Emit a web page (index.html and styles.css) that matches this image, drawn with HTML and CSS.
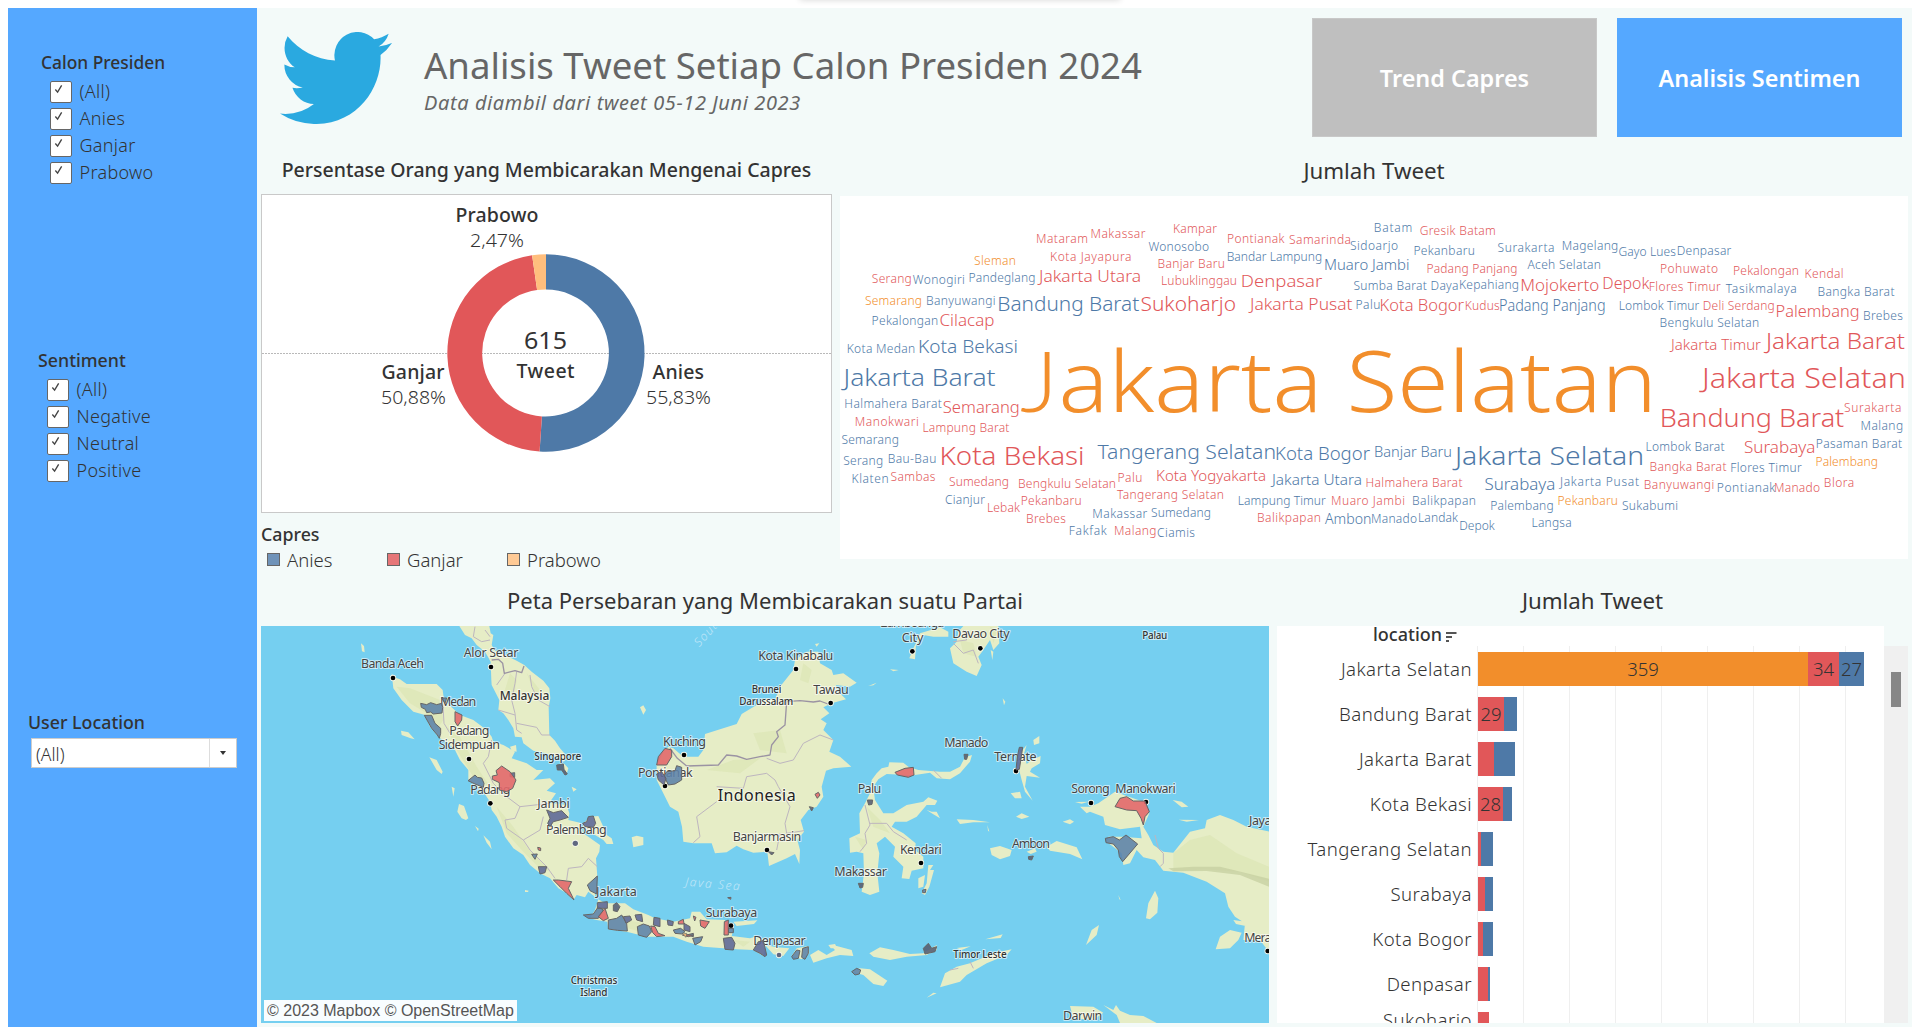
FILE: index.html
```html
<!DOCTYPE html>
<html lang="id">
<head>
<meta charset="utf-8">
<title>Analisis Tweet Setiap Calon Presiden 2024</title>
<link rel="stylesheet" href="styles.css">
</head>
<body>
<div class="top-shadow"></div>
<div class="dashboard">
  <aside class="sidebar">
    <section class="filter filter-capres">
      <h3>Calon Presiden</h3>
      <label><span class="box"><svg viewBox="0 0 10 10"><path d="M1.5 5.5L4 8.5L8.5 1"/></svg></span><span>(All)</span></label>
      <label><span class="box"><svg viewBox="0 0 10 10"><path d="M1.5 5.5L4 8.5L8.5 1"/></svg></span><span>Anies</span></label>
      <label><span class="box"><svg viewBox="0 0 10 10"><path d="M1.5 5.5L4 8.5L8.5 1"/></svg></span><span>Ganjar</span></label>
      <label><span class="box"><svg viewBox="0 0 10 10"><path d="M1.5 5.5L4 8.5L8.5 1"/></svg></span><span>Prabowo</span></label>
    </section>
    <section class="filter filter-sentiment">
      <h3>Sentiment</h3>
      <label><span class="box"><svg viewBox="0 0 10 10"><path d="M1.5 5.5L4 8.5L8.5 1"/></svg></span><span>(All)</span></label>
      <label><span class="box"><svg viewBox="0 0 10 10"><path d="M1.5 5.5L4 8.5L8.5 1"/></svg></span><span>Negative</span></label>
      <label><span class="box"><svg viewBox="0 0 10 10"><path d="M1.5 5.5L4 8.5L8.5 1"/></svg></span><span>Neutral</span></label>
      <label><span class="box"><svg viewBox="0 0 10 10"><path d="M1.5 5.5L4 8.5L8.5 1"/></svg></span><span>Positive</span></label>
    </section>
    <section class="filter filter-location">
      <h3>User Location</h3>
      <div class="select"><span>(All)</span><i></i></div>
    </section>
  </aside>
  <main class="main">
    <header class="header">
      <svg class="bird" viewBox="0 2.25 24 19.5" preserveAspectRatio="none"><path d="M23.953 4.57a10 10 0 01-2.825.775 4.958 4.958 0 002.163-2.723c-.951.555-2.005.959-3.127 1.184a4.92 4.92 0 00-8.384 4.482C7.69 8.095 4.067 6.13 1.64 3.162a4.822 4.822 0 00-.666 2.475c0 1.71.87 3.213 2.188 4.096a4.904 4.904 0 01-2.228-.616v.06a4.923 4.923 0 003.946 4.827 4.996 4.996 0 01-2.212.085 4.936 4.936 0 004.604 3.417 9.867 9.867 0 01-6.102 2.105c-.39 0-.779-.023-1.17-.067a13.995 13.995 0 007.557 2.209c9.053 0 13.998-7.496 13.998-13.985 0-.21 0-.42-.015-.63A9.935 9.935 0 0024 4.59z"/></svg>
      <div class="titles">
        <h1>Analisis Tweet Setiap Calon Presiden 2024</h1>
        <p>Data diambil dari tweet 05-12 Juni 2023</p>
      </div>
      <nav class="nav">
        <a class="nav-gray">Trend Capres</a>
        <a class="nav-blue">Analisis Sentimen</a>
      </nav>
    </header>

    <div class="row row-top">
      <section class="col-donut">
        <h2 class="h-donut">Persentase Orang yang Membicarakan Mengenai Capres</h2>
        <div class="panel-donut">
          <svg viewBox="262 195 569 317" width="569" height="317">
            <path d="M262 353.5H831" stroke="#b9b9b9" stroke-dasharray="2 1"/>
            <path d="M546 254.3A98.7 98.7 0 1 1 539.6 451.5L541.9 416.4A63.5 63.5 0 1 0 546 289.5Z" fill="#4e79a7"/>
            <path d="M539.6 451.5A98.7 98.7 0 0 1 532.1 255.3L537.1 290.1A63.5 63.5 0 0 0 541.9 416.4Z" fill="#e15759"/>
            <path d="M532.1 255.3A98.7 98.7 0 0 1 546 254.3V289.5A63.5 63.5 0 0 0 537.1 290.1Z" fill="#ffbe7d"/>
            <g class="donut-name">
              <text x="455.5" y="221.5" textLength="83">Prabowo</text>
              <text x="381.5" y="379" textLength="63">Ganjar</text>
              <text x="652.5" y="379" textLength="51.5">Anies</text>
              <text x="516.5" y="378" textLength="58">Tweet</text>
            </g>
            <text class="donut-total" x="524" y="349" textLength="43" lengthAdjust="spacingAndGlyphs">615</text>
            <g class="donut-pct">
              <text x="470" y="247" textLength="54" lengthAdjust="spacingAndGlyphs">2,47%</text>
              <text x="381" y="404" textLength="65" lengthAdjust="spacingAndGlyphs">50,88%</text>
              <text x="646" y="404" textLength="65" lengthAdjust="spacingAndGlyphs">55,83%</text>
            </g>
          </svg>
        </div>
        <div class="legend">
          <h3>Capres</h3>
          <ul>
            <li><i class="sw-a"></i>Anies</li>
            <li><i class="sw-g"></i>Ganjar</li>
            <li><i class="sw-p"></i>Prabowo</li>
          </ul>
        </div>
      </section>

      <section class="col-cloud">
        <h2 class="h-cloud">Jumlah Tweet</h2>
        <svg class="cloud" viewBox="840 196 1068 363" width="1068" height="363">
          <g class="o">
            <text class="top-word" x="1020" y="411.7" textLength="637" lengthAdjust="spacingAndGlyphs" font-size="85"><tspan class="cap-j">J</tspan>akarta Selatan</text>
            <text x="974" y="264.7" textLength="42">Sleman</text>
            <text x="865" y="305.3" textLength="57">Semarang</text>
            <text x="1815.5" y="466" textLength="62.5">Palembang</text>
            <text x="1557.5" y="505" textLength="60.5">Pekanbaru</text>
          </g>
          <g class="r">
            <text x="1036" y="243" textLength="52">Mataram</text>
            <text x="1090.5" y="238" textLength="55">Makassar</text>
            <text x="1173" y="233" textLength="44">Kampar</text>
            <text x="1227" y="243" textLength="57.5">Pontianak</text>
            <text x="1289" y="244.3" textLength="62">Samarinda</text>
            <text x="1050" y="261" textLength="81.5">Kota Jayapura</text>
            <text x="1157.5" y="268" textLength="67.5">Banjar Baru</text>
            <text x="871.8" y="283" textLength="40">Serang</text>
            <text x="1039" y="282.3" textLength="102" lengthAdjust="spacingAndGlyphs" font-size="16">Jakarta Utara</text>
            <text x="1161" y="284.7" textLength="76">Lubuklinggau</text>
            <text x="1240.8" y="286.7" textLength="81.5" lengthAdjust="spacingAndGlyphs" font-size="17">Denpasar</text>
            <text x="1140.5" y="311" textLength="95.5" lengthAdjust="spacingAndGlyphs" font-size="20">Sukoharjo</text>
            <text x="1250" y="310" textLength="102.5" lengthAdjust="spacingAndGlyphs" font-size="16">Jakarta Pusat</text>
            <text x="939.5" y="326.3" textLength="55" lengthAdjust="spacingAndGlyphs" font-size="16">Cilacap</text>
            <text x="1419.8" y="235.3" textLength="76">Gresik Batam</text>
            <text x="1426.4" y="272.7" textLength="91">Padang Panjang</text>
            <text x="1660" y="273" textLength="58">Pohuwato</text>
            <text x="1733" y="275.3" textLength="66">Pekalongan</text>
            <text x="1804.5" y="278" textLength="39">Kendal</text>
            <text x="1520.2" y="291.3" textLength="79" lengthAdjust="spacingAndGlyphs" font-size="16.5">Mojokerto</text>
            <text x="1602.3" y="289" textLength="47" lengthAdjust="spacingAndGlyphs" font-size="16">Depok</text>
            <text x="1648.8" y="291" textLength="72">Flores Timur</text>
            <text x="1379.6" y="311" textLength="84.5" lengthAdjust="spacingAndGlyphs" font-size="16.5">Kota Bogor</text>
            <text x="1464.7" y="309.7" textLength="35">Kudus</text>
            <text x="1702.8" y="309.7" textLength="72">Deli Serdang</text>
            <text x="1775.5" y="317" textLength="84" lengthAdjust="spacingAndGlyphs" font-size="16.5">Palembang</text>
            <text x="1671" y="350" textLength="90" lengthAdjust="spacingAndGlyphs" font-size="14.5">Jakarta Timur</text>
            <text x="1766" y="349" textLength="139" lengthAdjust="spacingAndGlyphs" font-size="22">Jakarta Barat</text>
            <text x="1702" y="387.7" textLength="204" lengthAdjust="spacingAndGlyphs" font-size="27.5">Jakarta Selatan</text>
            <text x="942.8" y="413" textLength="77" lengthAdjust="spacingAndGlyphs" font-size="16">Semarang</text>
            <text x="854.8" y="426" textLength="64">Manokwari</text>
            <text x="922.4" y="432" textLength="87">Lampung Barat</text>
            <text x="939.5" y="465" textLength="145" lengthAdjust="spacingAndGlyphs" font-size="26">Kota Bekasi</text>
            <text x="890.5" y="481" textLength="45">Sambas</text>
            <text x="949" y="486" textLength="60">Sumedang</text>
            <text x="1018" y="488" textLength="98">Bengkulu Selatan</text>
            <text x="1117.5" y="482" textLength="25">Palu</text>
            <text x="1156" y="481" textLength="110" lengthAdjust="spacingAndGlyphs" font-size="14">Kota Yogyakarta</text>
            <text x="1365.5" y="487" textLength="97">Halmahera Barat</text>
            <text x="987" y="512" textLength="33">Lebak</text>
            <text x="1020.7" y="505" textLength="61">Pekanbaru</text>
            <text x="1117" y="499" textLength="107">Tangerang Selatan</text>
            <text x="1331" y="505" textLength="74">Muaro Jambi</text>
            <text x="1026" y="523" textLength="40">Brebes</text>
            <text x="1257" y="522" textLength="64">Balikpapan</text>
            <text x="1114" y="535" textLength="42.5">Malang</text>
            <text x="1744" y="453" textLength="71.5" lengthAdjust="spacingAndGlyphs" font-size="15.5">Surabaya</text>
            <text x="1659.8" y="427" textLength="184.5" lengthAdjust="spacingAndGlyphs" font-size="25.5">Bandung Barat</text>
            <text x="1844" y="412" textLength="57.5">Surakarta</text>
            <text x="1649.5" y="471" textLength="77">Bangka Barat</text>
            <text x="1643.8" y="489" textLength="70.5">Banyuwangi</text>
            <text x="1774" y="492" textLength="46">Manado</text>
            <text x="1823.8" y="487" textLength="30.5">Blora</text>
          </g>
          <g class="b">
            <text x="1148.5" y="251" textLength="60.5">Wonosobo</text>
            <text x="1226.7" y="261" textLength="95.5">Bandar Lampung</text>
            <text x="1324" y="270" textLength="85.5" lengthAdjust="spacingAndGlyphs" font-size="14.5">Muaro Jambi</text>
            <text x="912.8" y="283.7" textLength="52">Wonogiri</text>
            <text x="968.5" y="282" textLength="67">Pandeglang</text>
            <text x="1353.5" y="289.7" textLength="105">Sumba Barat Daya</text>
            <text x="926" y="305" textLength="69.5">Banyuwangi</text>
            <text x="997.3" y="311" textLength="142" lengthAdjust="spacingAndGlyphs" font-size="20">Bandung Barat</text>
            <text x="1355.4" y="309" textLength="25">Palu</text>
            <text x="871.6" y="324.7" textLength="66.5">Pekalongan</text>
            <text x="846.7" y="353" textLength="68.5">Kota Medan</text>
            <text x="918" y="353" textLength="100" lengthAdjust="spacingAndGlyphs" font-size="17.5">Kota Bekasi</text>
            <text x="843.5" y="386" textLength="152" lengthAdjust="spacingAndGlyphs" font-size="23.5">Jakarta Barat</text>
            <text x="1373.8" y="232" textLength="38.5">Batam</text>
            <text x="1350" y="250.3" textLength="48">Sidoarjo</text>
            <text x="1413.4" y="255.3" textLength="61.5">Pekanbaru</text>
            <text x="1497.5" y="252.3" textLength="57">Surakarta</text>
            <text x="1561.8" y="250.3" textLength="56.5">Magelang</text>
            <text x="1618.4" y="256" textLength="57.5">Gayo Lues</text>
            <text x="1676.8" y="255.3" textLength="54.5">Denpasar</text>
            <text x="1527.5" y="269.3" textLength="73.5">Aceh Selatan</text>
            <text x="1459" y="289" textLength="60">Kepahiang</text>
            <text x="1725.8" y="293" textLength="71">Tasikmalaya</text>
            <text x="1817.5" y="296" textLength="77">Bangka Barat</text>
            <text x="1499" y="311" textLength="106.5" lengthAdjust="spacingAndGlyphs" font-size="15.5">Padang Panjang</text>
            <text x="1618.8" y="309.7" textLength="80.5">Lombok Timur</text>
            <text x="1863" y="320" textLength="40">Brebes</text>
            <text x="1659.6" y="327" textLength="99.5">Bengkulu Selatan</text>
            <text x="844.3" y="408" textLength="97.5">Halmahera Barat</text>
            <text x="841.4" y="444" textLength="57.5">Semarang</text>
            <text x="843.2" y="465" textLength="40">Serang</text>
            <text x="887.8" y="463" textLength="48.5">Bau-Bau</text>
            <text x="1097.5" y="459" textLength="178.5" lengthAdjust="spacingAndGlyphs" font-size="20">Tangerang Selatan</text>
            <text x="1275" y="460" textLength="95" lengthAdjust="spacingAndGlyphs" font-size="18">Kota Bogor</text>
            <text x="1374" y="457" textLength="78" lengthAdjust="spacingAndGlyphs" font-size="14">Banjar Baru</text>
            <text x="851.6" y="483" textLength="37">Klaten</text>
            <text x="1272" y="485" textLength="90" lengthAdjust="spacingAndGlyphs" font-size="14.5">Jakarta Utara</text>
            <text x="945" y="504" textLength="40">Cianjur</text>
            <text x="1237.8" y="505" textLength="88">Lampung Timur</text>
            <text x="1092.3" y="518" textLength="55">Makassar</text>
            <text x="1151" y="517" textLength="60">Sumedang</text>
            <text x="1325" y="524" textLength="46.5" lengthAdjust="spacingAndGlyphs" font-size="14">Ambon</text>
            <text x="1371" y="522.7" textLength="46">Manado</text>
            <text x="1068.8" y="535" textLength="38">Fakfak</text>
            <text x="1157" y="537" textLength="38">Ciamis</text>
            <text x="1455" y="465" textLength="189" lengthAdjust="spacingAndGlyphs" font-size="25.5">Jakarta Selatan</text>
            <text x="1645.6" y="451" textLength="79">Lombok Barat</text>
            <text x="1815.7" y="448.3" textLength="86.5">Pasaman Barat</text>
            <text x="1860.6" y="430" textLength="42.5">Malang</text>
            <text x="1730.2" y="472" textLength="71.5">Flores Timur</text>
            <text x="1484.4" y="490" textLength="71" lengthAdjust="spacingAndGlyphs" font-size="16">Surabaya</text>
            <text x="1560" y="486" textLength="79">Jakarta Pusat</text>
            <text x="1716.8" y="492" textLength="58.5">Pontianak</text>
            <text x="1412" y="505" textLength="64">Balikpapan</text>
            <text x="1490.2" y="510" textLength="63.5">Palembang</text>
            <text x="1622" y="510" textLength="56">Sukabumi</text>
            <text x="1418" y="522" textLength="40">Landak</text>
            <text x="1459.3" y="530" textLength="35.5">Depok</text>
            <text x="1531.6" y="527" textLength="40">Langsa</text>
          </g>
        </svg>
      </section>
    </div>

    <div class="row row-bottom">
      <section class="col-map">
        <h2 class="h-map">Peta Persebaran yang Membicarakan suatu Partai</h2>
        <div class="map">
          <svg viewBox="3 18 3024 1191" width="1008" height="397">
            <g class="land">
              <path d="M598 18H688L692 40L700 45L695 75L705 92L735 105L770 122L793 135L815 155L850 182L868 205L871 235L866 262L868 345L885 362L900 385L920 408L912 425L890 410L850 398L820 392L790 370L785 352L765 350L760 325L745 300L730 280L715 270L718 240L700 205L695 195L694 180L692 125L675 95L650 75L635 55L615 45Z"/>
              <path d="M395 160L402 172L420 178L440 192H530L548 210L552 240L575 262L600 285L640 300L680 330L695 350L700 365L730 375L765 395L755 415L800 430L830 450L850 450L820 480L870 475L885 490L860 512L888 520L868 548L920 555L928 580L925 600L960 608L970 640L1020 675L1018 695L1008 715L1012 770L1005 830L985 815L975 832L950 825L940 840L920 820L895 805L870 775L840 760L810 735L790 705L760 685L735 650L725 620L710 590L695 570L690 545L670 515L650 500L625 480V450L600 420L585 390L560 365L540 355L510 320L495 285L460 275L425 240L400 205Z"/>
              <path d="M968 612L990 590L1015 588L1030 620L1040 645L1055 655L1060 672L1040 672L1030 660L1005 645L970 622ZM1115 652L1130 647L1150 652V675L1120 682ZM1140 262L1150 256L1158 270L1150 284ZM423 332L445 337L464 358L452 355L425 345ZM508 412L530 420L548 455L545 462L530 450ZM597 552L612 558L625 595L618 600L605 595L592 575ZM645 618L656 626L654 634ZM670 646L690 665L695 688L680 668ZM303 70L312 78L314 97L306 94ZM795 810L806 812L804 816H795ZM575 500L584 505L580 530ZM935 500L950 508L940 515ZM750 380L768 375L770 395L755 392ZM910 428L925 445L920 462L912 448Z"/>
              <path d="M1240 385L1270 410H1315L1330 390L1335 342L1430 312L1445 282L1490 255L1520 235L1545 240L1560 200L1600 150L1605 120L1640 95L1675 95L1680 130L1715 150L1720 165L1750 160L1790 188L1770 200L1728 195L1735 215L1758 238L1715 250L1690 262L1708 280L1682 298L1700 310L1690 330L1720 360L1708 395L1740 410L1774 440L1720 445L1698 452L1685 500L1690 530L1670 560L1645 570L1622 600L1632 635L1612 660L1620 690L1618 732L1605 702L1580 715L1527 738L1522 695L1480 698L1450 688L1430 677L1400 697L1365 700L1355 670L1300 670L1270 665L1266 620L1255 575L1230 560L1205 510L1190 480L1190 435L1210 395L1225 380Z"/>
              <path d="M1015 838L1035 850L1095 850L1120 868L1165 885L1185 895L1240 905L1290 895L1295 875L1320 875L1340 898L1395 900L1400 925L1420 930L1415 948L1470 955L1485 950L1520 960L1510 1008L1480 990L1430 988L1390 985L1330 980L1280 965L1240 950L1160 950L1100 935L1045 928L1042 905L1010 900L990 895L1005 870ZM1420 905L1492 901L1482 912L1430 918Z"/>
            </g>
            <g class="land" transform="translate(1500 0)">
              <path d="M15 975L50 982L88 985L70 1008L40 1003ZM95 1008L110 985L145 978L148 1000L125 1018ZM150 1005L175 990L200 1005L225 990L210 975L230 978L275 990L280 1008L240 1005L200 1015L160 1028ZM328 1000L360 982L400 990L450 1002L490 1000L530 975V990L500 1005L440 1010L390 1020L340 1010ZM276 1055L300 1045L330 1048L382 1082L370 1098L340 1092L310 1065ZM540 1102L555 1060L590 1040L630 1030L700 1000L755 988L740 1005L680 1030L620 1065L600 1085ZM500 1133L520 1118L530 1120ZM676 958L728 943L722 954ZM590 984L632 979L605 990ZM205 975L225 972L232 985H212Z"/>
              <path d="M330 520L335 480L350 460L365 445L385 440L388 427L430 428L445 440L475 450L540 455L570 455L600 440L615 412L636 405L630 425L600 460L570 478L530 475L510 458L460 466L380 462L355 478L340 500L345 540L370 580L400 580L440 555L490 545L505 532L532 542L525 555L500 555L470 590L440 605H405L395 620L430 640L467 670L465 690L490 710V745L455 752L448 777L425 775L430 740L400 710L405 680L375 650L350 670L358 700L352 760L358 815L330 825L305 815L312 760L310 700L290 695L270 698L268 655L300 640L298 580L315 550ZM475 775L495 765L490 800L475 805ZM505 735H520L510 750H522L508 800L495 825L485 820L500 790ZM500 570L515 575L530 575L540 595L515 580Z"/>
              <path d="M780 400L800 375L792 400L800 432L815 420L842 408L840 430L815 445L810 455L840 473L800 468L795 500L818 542L795 515L785 480L775 440ZM820 360L838 348V370L822 375ZM752 520L780 515L785 535L765 535ZM690 685L720 678L755 690L750 708L720 718L695 705ZM860 680L890 663L950 682L967 718L930 702L870 692ZM590 598L640 600L690 607L640 607L600 612ZM682 615L688 635L684 632ZM768 590L785 580L808 590L785 597ZM908 605L930 598L942 605L930 613ZM800 695L825 685L830 695L812 702Z"/>
              <path d="M960 560L990 560L1015 550L1065 515L1100 528L1150 545L1168 580L1150 620L1165 645L1180 675L1210 695L1240 698L1290 635L1335 625L1340 600L1380 585L1420 600L1460 620L1530 635V1000L1500 960L1450 960L1455 910L1425 890L1405 860L1395 820L1340 785L1270 758L1210 752L1185 720L1150 712L1130 690L1110 730L1090 735L1085 700L1040 665L1045 650L1085 650L1145 655L1140 620L1080 628L1035 615L1030 590L990 575L980 580ZM1367 988L1380 950L1410 930L1445 938L1435 960L1410 985ZM1158 895L1165 850L1185 812L1195 835L1192 878L1170 898ZM978 975L995 930L1017 915L1010 945ZM1238 540L1265 545L1285 560L1265 562ZM1256 599L1317 600L1280 605ZM1075 825L1082 840L1078 838ZM1100 808L1093 830ZM945 546L985 545L965 551ZM1420 900L1457 905V918L1428 912Z"/>
              <path d="M570 85L590 65L595 35L610 18H715L718 70L700 90L690 60L670 90L655 110L665 135L650 168L620 155L580 130ZM470 65L480 40L540 22L565 35V50L520 50L490 45L468 75L465 118L448 115L460 85ZM692 90L700 95L697 120ZM390 148L416 150L400 154ZM325 198L350 188L340 196ZM728 235L736 245L732 256ZM655 283L662 295ZM165 72L178 70L170 80ZM930 1158L1000 1160L1030 1178L1000 1200L940 1195ZM1030 1155L1060 1170L1068 1155L1080 1172L1110 1185L1150 1188L1190 1209H1080L1070 1185Z"/>
            </g>
            <g class="relief">
              <path d="M410 200L450 205L540 240L550 300L530 330L500 280L450 250ZM560 320L600 350L650 440L690 500L640 470L590 390ZM710 560L760 620L800 680L870 750L850 755L790 695L740 640ZM750 160L770 180L760 240L735 210ZM800 160L840 210L830 230ZM1340 450L1420 420L1500 415L1440 460ZM1480 340L1560 330L1580 400L1500 390ZM1100 900L1150 910L1140 935L1105 925ZM1240 915L1280 930L1270 945ZM1420 960L1470 965L1450 980Z"/>
              <g transform="translate(1500 0)">
                <path d="M130 130L155 150L145 190L120 180ZM320 560L360 600L390 640L340 620ZM285 650L320 660L310 690ZM1240 700L1290 660L1350 645L1430 700L1527 740V785L1440 755L1330 748L1240 755ZM600 60L640 70L650 110L610 100ZM690 20L715 30L700 70Z"/>
                <path class="ridge" d="M1225 745L1300 740L1380 740L1430 752L1527 776V800L1440 765L1340 753L1240 754Z"/>
              </g>
            </g>
            <g class="borders">
              <path d="M645 20L640 50L665 65L690 60M675 30L690 50M710 195L735 160M770 155L765 190L755 240L765 280L770 330L785 340M715 270L765 285M770 310L830 322L845 345L870 345M810 165L815 200L835 240L870 260M548 240L552 310L570 340M695 360L685 410L670 430L700 490L740 530L780 560L870 550M780 560L765 595L735 600L740 625L790 660L840 630L850 590M790 660L810 690L860 740L885 775M920 780L925 745L965 740L985 715L1012 740M1370 545L1310 590L1320 650L1300 668M1370 500L1450 505L1460 470L1520 460L1545 480L1555 500L1590 560L1575 610L1580 640L1632 632M1560 640L1550 690M1520 415L1560 430L1600 420L1630 370L1680 345L1720 360"/>
              <path class="nation" d="M695 120L715 118L728 130L733 160L765 152L785 158L792 138M1230 385L1252 415L1280 438L1375 435L1400 405L1430 408L1460 418L1500 410L1530 405L1535 375L1555 350L1550 335L1575 315L1580 245L1620 242L1660 246L1680 243L1712 255"/>
              <path d="M1815 555L1830 615L1815 640L1820 670L1800 695M1830 610L1880 610L1900 635L1940 660M2020 450L2045 475M2685 645L2695 685L2710 700V730L2700 740M2080 70L2110 100L2140 90L2155 130M2110 30L2120 60L2080 65M2130 1025L2140 1045M2070 1050L2095 1045"/>
            </g>
            <g class="places">
              <text x="303" y="143" textLength="189">Banda Aceh</text><text x="611" y="110" textLength="164">Alor Setar</text>
              <text x="540" y="258" textLength="109">Medan</text><text x="568" y="345" textLength="120">Padang</text>
              <text x="536" y="388" textLength="184">Sidempuan</text><text x="631" y="522" textLength="120">Padang</text>
              <text x="832" y="563" textLength="97">Jambi</text><text x="858" y="642" textLength="182">Palembang</text>
              <text x="1008" y="829" textLength="122">Jakarta</text><text x="1337" y="891" textLength="155">Surabaya</text>
              <text x="1480" y="975" textLength="157">Denpasar</text><text x="1209" y="377" textLength="129">Kuching</text>
              <text x="1134" y="470" textLength="164">Pontianak</text><text x="1418" y="662" textLength="206">Banjarmasin</text>
              <text x="1495" y="119" textLength="225">Kota Kinabalu</text><text x="1660" y="221" textLength="106">Tawau</text>
              <text x="1862" y="22" textLength="191">Zamboanga</text><text x="1925" y="65" textLength="65">City</text>
              <text x="2077" y="55" textLength="172">Davao City</text><text x="2053" y="381" textLength="132">Manado</text>
              <text x="2203" y="422" textLength="127">Ternate</text><text x="1793" y="520" textLength="71">Palu</text>
              <text x="1920" y="701" textLength="125">Kendari</text><text x="1723" y="768" textLength="158">Makassar</text>
              <text x="2256" y="684" textLength="114">Ambon</text><text x="2434" y="518" textLength="115">Sorong</text>
              <text x="2566" y="518" textLength="181">Manokwari</text><text x="2967" y="615" textLength="145">Jayapura</text>
              <text x="2953" y="965" textLength="136">Merauke</text><text x="2409" y="1199" textLength="118">Darwin</text>
              <g class="country">
                <text class="malay" x="719" y="241" textLength="149">Malaysia</text><text x="823" y="420" textLength="141">Singapore</text>
                <text x="932" y="1091" textLength="140">Christmas</text><text x="961" y="1128" textLength="81">Island</text>
                <text x="1475" y="220" textLength="89">Brunei</text><text x="1438" y="256" textLength="162">Darussalam</text>
                <text x="2647" y="57" textLength="75">Palau</text><text x="2080" y="1015" textLength="160">Timor Leste</text>
                <text class="indo" x="1373" y="542" textLength="234">Indonesia</text>
              </g>
            </g>
            <g class="seas">
              <text transform="translate(1275 797) rotate(5)" textLength="168">Java Sea</text>
              <text transform="translate(1318 82) rotate(-48)">South China Sea</text>
            </g>
            <g class="dots">
              <circle cx="399" cy="174" r="7"/><circle cx="693" cy="141" r="7"/><circle cx="627" cy="417" r="7"/><circle cx="691" cy="550" r="7"/><circle cx="1272" cy="405" r="7"/><circle cx="1215" cy="498" r="7"/><circle cx="1521" cy="690" r="7"/><circle cx="1608" cy="147" r="7"/><circle cx="1712" cy="249" r="7"/><circle cx="1957" cy="94" r="7"/><circle cx="2161" cy="85" r="7"/><circle cx="2268" cy="453" r="7"/><circle cx="1983" cy="729" r="7"/><circle cx="2493" cy="549" r="7"/><circle cx="2658" cy="546" r="7"/><circle cx="3023" cy="993" r="7"/><circle class="soft" cx="1557" cy="1005" r="7"/><circle class="soft" cx="946" cy="670" r="8"/><circle cx="1413" cy="917" r="7"/>
            </g>
            <g class="region blue">
              <path d="M482 250L500 254L512 248L530 254L545 250L548 262L546 279L520 282L512 276L500 278L496 268L484 262ZM493 286L515 286L525 310L542 325V340L538 355L532 345L515 325ZM624 482L645 465L652 472L665 474L672 490L670 502L645 492ZM1212 468L1220 455L1245 452L1250 437L1265 442V480L1245 492L1225 495L1218 480ZM982 795L1012 768L1010 822L990 812ZM815 703L832 702L825 718Z"/>
              <path d="M970 885L1000 882L1015 860L1030 870L1015 895L985 895ZM1045 900L1070 895L1085 885L1100 910L1102 933L1072 931L1045 927ZM1132 920L1150 912L1168 918L1175 935L1160 952L1135 945ZM1240 930L1262 925L1275 935L1265 942L1245 940ZM1280 945L1300 940V950ZM1298 955L1328 950L1322 965L1305 975ZM1404 925H1420V938H1406Z"/>
              <path d="M2536 655L2560 650L2578 660L2598 645L2633 672L2588 725L2578 710L2575 690L2560 672L2538 668ZM1775 1055L1790 1045L1802 1050L1798 1062L1785 1065ZM1628 985L1645 980L1645 1000L1635 1018L1625 1012ZM1595 1010L1610 990L1620 992L1615 1015L1600 1018ZM1988 810L1998 808L1996 818H1988ZM545 234L560 234L555 250Z"/>
            </g>
            <g class="region navy">
              <path d="M860 570L880 578L905 572L925 592L900 600L880 605L870 620L863 610L870 595ZM968 610L980 605L985 590L1000 588L1007 610L1000 622L975 620ZM835 740L860 740L855 758L840 762ZM1190 462L1205 455L1218 475L1212 495L1195 480ZM750 460L764 458V472L750 470ZM1012 848L1042 845L1042 865L1012 865ZM1090 890L1110 888L1115 900L1098 910ZM1125 885L1145 883L1148 905L1130 900ZM1182 892L1200 895L1200 920L1180 915ZM1222 900L1240 905L1238 917L1224 915ZM1272 910L1290 920V935L1272 930ZM1390 955L1415 952L1425 970L1420 990L1395 988ZM1480 990L1495 965L1510 962L1520 1005L1515 1010L1500 1000ZM2278 382H2288L2284 410L2278 448L2268 450L2272 410Z"/>
              <path class="dark" d="M1990 985L2005 970L2015 985L2030 980L2025 995L1995 1002ZM890 435L910 432L912 448L922 462L915 465L905 450L892 450ZM1060 855L1070 848L1080 860L1072 875L1060 872ZM1648 560L1660 563L1655 573ZM1525 695L1542 698L1535 705ZM1795 790L1810 790L1808 802L1800 804ZM1822 540L1838 540L1836 553L1826 555ZM2112 403H2124L2120 418H2114ZM2305 710L2320 708L2315 720L2306 718Z"/>
            </g>
            <g class="region red">
              <path d="M725 438L750 455L768 480L758 505L740 515L718 510V488L697 478V468L712 465L708 452ZM585 275L606 285L605 300L593 318L585 305ZM1215 385L1235 390V410L1220 435L1190 435L1195 410ZM880 780L895 780L935 785L925 805L942 840L920 820L900 800ZM1015 890L1035 865L1045 895L1030 902ZM1172 918L1185 920L1195 940L1215 947L1190 950L1178 938ZM833 682L842 684L842 692L835 690ZM1255 905L1270 898L1272 912L1255 912ZM1320 900L1348 905L1335 925L1322 918ZM1300 888L1308 892L1304 903ZM1393 905L1405 900V945L1392 945ZM1403 833L1413 832L1412 838ZM1267 945L1300 945L1285 950Z"/>
              <path d="M1905 457L1935 445L1960 442L1962 465L1945 472L1912 465ZM1665 523L1675 517L1680 525L1672 535ZM2565 560L2580 535L2600 530L2620 543H2655L2668 575L2655 590L2650 615L2643 595L2630 572L2600 570Z"/>
            </g>
            <path d="M1268 942L1280 940L1278 952Z" fill="#f0b878" stroke="#666" stroke-width="2"/>
          </svg>
          <span class="credit">© 2023 Mapbox © OpenStreetMap</span>
        </div>
      </section>

      <section class="col-bars">
        <h2 class="h-bars">Jumlah Tweet</h2>
        <div class="bars-wrap">
          <div class="bars">
            <div class="bars-head">location<svg viewBox="0 0 11 10" width="11" height="10"><path d="M0 1H10.5M0 5H6M0 9H3" stroke="#555" stroke-width="2"/></svg></div>
            <div class="bars-body">
              <div class="bar-row"><span>Jakarta Selatan</span><div><i class="bo" style="width:330px">359</i><i class="br" style="width:31px">34</i><i class="bb" style="width:25px">27</i></div></div>
              <div class="bar-row"><span>Bandung Barat</span><div><i class="br" style="width:26px">29</i><i class="bb" style="width:13px"></i></div></div>
              <div class="bar-row"><span>Jakarta Barat</span><div><i class="br" style="width:16px"></i><i class="bb" style="width:21px"></i></div></div>
              <div class="bar-row"><span>Kota Bekasi</span><div><i class="br" style="width:25px">28</i><i class="bb" style="width:9px"></i></div></div>
              <div class="bar-row"><span>Tangerang Selatan</span><div><i class="br" style="width:3px"></i><i class="bb" style="width:12px"></i></div></div>
              <div class="bar-row"><span>Surabaya</span><div><i class="br" style="width:7px"></i><i class="bb" style="width:8px"></i></div></div>
              <div class="bar-row"><span>Kota Bogor</span><div><i class="br" style="width:5px"></i><i class="bb" style="width:10px"></i></div></div>
              <div class="bar-row"><span>Denpasar</span><div><i class="br" style="width:10px"></i><i class="bb" style="width:2px"></i></div></div>
              <div class="bar-row bar-last"><span>Sukoharjo</span><div><i class="br" style="width:11px"></i></div></div>
            </div>
          </div>
          <div class="scroll"><i></i></div>
        </div>
      </section>
    </div>
  </main>
</div>
</body>
</html>
```
FILE: styles.css
```css
* { box-sizing: border-box; }
body {
  margin: 0;
  padding: 8px;
  width: 1920px;
  height: 1030px;
  overflow: hidden;
  background: #fff;
  color: #333;
  font-family: "Noto Sans", "Open Sans", sans-serif;
}
h1, h2, h3, p, ul { margin: 0; padding: 0; font-weight: 400; }
svg { display: block; }

.top-shadow {
  position: absolute;
  top: -10px;
  left: 800px;
  width: 320px;
  height: 10px;
  box-shadow: 0 0 6px rgba(0, 0, 0, .16);
}
.dashboard { display: flex; width: 1904px; height: 1019px; background: #f3faf9; }

/* Sidebar filters */
.sidebar { width: 249px; background: #55a8ff; }
.filter h3 { font-size: 17.8px; line-height: 24px; font-weight: 500; white-space: nowrap; margin-bottom: 4px; }
.filter label { display: flex; align-items: center; height: 27px; font-size: 18px; font-weight: 300; line-height: 27px; letter-spacing: .3px; }
.filter .box { width: 22px; height: 22px; background: #fff; border: 1px solid #666; border-radius: 2px; margin-right: 7.5px; }
.filter .box svg { width: 9px; height: 10px; margin: 2px 0 0 3px; }
.filter .box path { fill: none; stroke: #444; stroke-width: 1.5; }
.filter-capres { padding: 42px 0 0 33px; }
.filter-capres h3 { font-size: 17.4px; }
.filter-capres label { padding-left: 9px; }
.filter-sentiment { padding: 162px 0 0 30px; }
.filter-sentiment label { padding-left: 9px; }
.filter-location { padding: 226px 0 0 20px; }
.select {
  display: flex;
  width: 206px;
  height: 30px;
  margin-left: 3px;
  padding-left: 4px;
  background: #fff;
  border: 1px solid #ccc;
  font-size: 17.5px;
  font-weight: 300;
  line-height: 30px;
  justify-content: space-between;
}
.select i { width: 27px; border-left: 1px solid #ddd; display: flex; justify-content: center; }
.select i::after { content: ""; margin-top: 12px; height: 0; border: 3.5px solid transparent; border-top: 4px solid #333; border-bottom: 0; }

/* Header */
.main { flex: 1; padding-left: 4px; }
.header { display: flex; height: 142px; padding: 10px 10px 0 19px; }
.bird { width: 112px; height: 92px; margin-top: 14px; fill: #2aa9e0; }
.titles { margin: 22px 0 0 32px; color: #666; white-space: nowrap; }
.titles h1 { font-size: 36.6px; line-height: 50px; }
.titles p { font-size: 20px; line-height: 25px; font-style: italic; letter-spacing: .6px; }
.nav { display: flex; gap: 20px; margin-left: auto; }
.nav a {
  width: 285px;
  height: 119px;
  display: flex;
  align-items: center;
  justify-content: center;
  padding-top: 0;
  color: #fff;
  font-size: 23.4px;
  font-weight: 600;
}
.nav-gray { background: #bfbfbf; border: 1px solid #c8c8c8; }
.nav-blue { background: #55a8ff; }

/* Rows */
.row { display: flex; }
.row h2 { text-align: center; white-space: nowrap; }
.row-top { height: 426px; gap: 8px; }
.col-donut { width: 571px; }
.h-donut { font-size: 19.5px; line-height: 40px; height: 44px; font-weight: 500; }
.row-top .h-donut { font-weight: 480; }
.panel-donut { height: 319px; border: 1px solid #c9c9c9; background: #fff; }
.panel-donut text { fill: #333; }
.donut-name { font-size: 19.5px; font-weight: 500; }
.donut-total { font-size: 24px; }
.donut-pct { font-size: 18px; font-weight: 300; }
.legend h3 { font-size: 17.8px; line-height: 26px; font-weight: 500; margin-top: 8px; }
.legend ul { display: flex; list-style: none; padding-left: 6px; }
.legend li { display: flex; align-items: center; width: 120px; height: 24px; font-size: 18.5px; font-weight: 300; }
.legend i { width: 13px; height: 13px; margin-right: 7px; border: 1px solid #666; }
.sw-a { background: #6f93b9; }
.sw-g { background: #e67678; }
.sw-p { background: #ffca95; }

.col-cloud { width: 1068px; }
.h-cloud { font-size: 22.3px; line-height: 41px; height: 46px; }
.cloud { background: #fff; font-size: 12px; font-weight: 340; }
.top-word { font-weight: 300; }
.cap-j { font-family: Lato, "Noto Sans", sans-serif; }
.o { fill: #f28e2b; }
.r { fill: #e15759; }
.b { fill: #4e79a7; }

.row-bottom { gap: 8px; }
.col-map { width: 1008px; }
.h-map { font-size: 22px; line-height: 49px; height: 50px; }
.map { position: relative; height: 397px; background: #75cff0; overflow: hidden; }
.land path { fill: #e6edc6; }
.relief path { fill: #dce5b6; opacity: .75; }
.relief .ridge { fill: #c5cfa0; }
.borders path { fill: none; stroke: #bdb5bf; stroke-width: 3; stroke-linejoin: round; }
.borders .nation { stroke: #9b93a3; stroke-width: 4; }
.places { font-size: 37.5px; fill: #444; paint-order: stroke; stroke: rgba(255, 255, 255, .6); stroke-width: 6px; stroke-linejoin: round; }
.country { font-size: 30px; font-weight: 500; fill: #333; }
.malay { font-size: 36px; }
.indo { font-size: 48px; font-weight: 400; fill: #222; }
.seas { font-size: 36px; font-style: italic; font-weight: 300; fill: #c0e6f8; letter-spacing: 4px; }
.dots circle { fill: #000; stroke: #f4f6ea; stroke-width: 5; paint-order: stroke; }
.dots .soft { fill: #5f6780; }
.region path { stroke: #666; stroke-width: 3; stroke-linejoin: round; }
.blue path { fill: #5c82a8; fill-opacity: .88; }
.navy path { fill: #5f6997; fill-opacity: .9; }
.navy .dark { fill: #575f74; }
.red path { fill: #e2686a; fill-opacity: .9; }
.credit {
  position: absolute;
  left: 3px;
  bottom: 2px;
  width: 253px;
  height: 21px;
  padding-left: 3px;
  background: rgba(255, 255, 255, .95);
  color: #555;
  font: 16px/21px "Liberation Sans", Arial, sans-serif;
  white-space: nowrap;
}

.col-bars { width: 631px; }
.h-bars { font-size: 22.3px; line-height: 49px; height: 50px; }
.bars-wrap { display: flex; height: 397px; }
.bars { width: 607px; background: #fff; overflow: hidden; }
.bars-head { display: flex; height: 20px; padding-left: 96px; font-size: 18px; font-weight: 500; line-height: 17px; }
.bars-head svg { margin: 6px 0 0 4px; }
.bars-body {
  height: 377px;
  overflow: hidden;
  background: repeating-linear-gradient(90deg, #efefef 0 1px, transparent 1px 46px) 200px 0 / 369px 100% no-repeat;
}
.bar-row { display: flex; height: 45px; padding-top: 6px; }
.bar-row span { width: 201px; padding-right: 6px; text-align: right; font-size: 18.6px; font-weight: 300; line-height: 34px; letter-spacing: .45px; white-space: nowrap; }
.bar-row div { display: flex; height: 34px; }
.bar-row i { font-style: normal; text-align: center; font-size: 18.5px; font-weight: 300; line-height: 34px; }
.bar-last span { line-height: 15px; }
.bo { background: #f28e2b; }
.br { background: #e15759; }
.bb { background: #4e79a7; }
.scroll { width: 24px; margin-top: 20px; padding: 26px 7px 0; background: #f0f0f0; }
.scroll i { display: block; width: 10px; height: 35px; background: #878787; }
```
